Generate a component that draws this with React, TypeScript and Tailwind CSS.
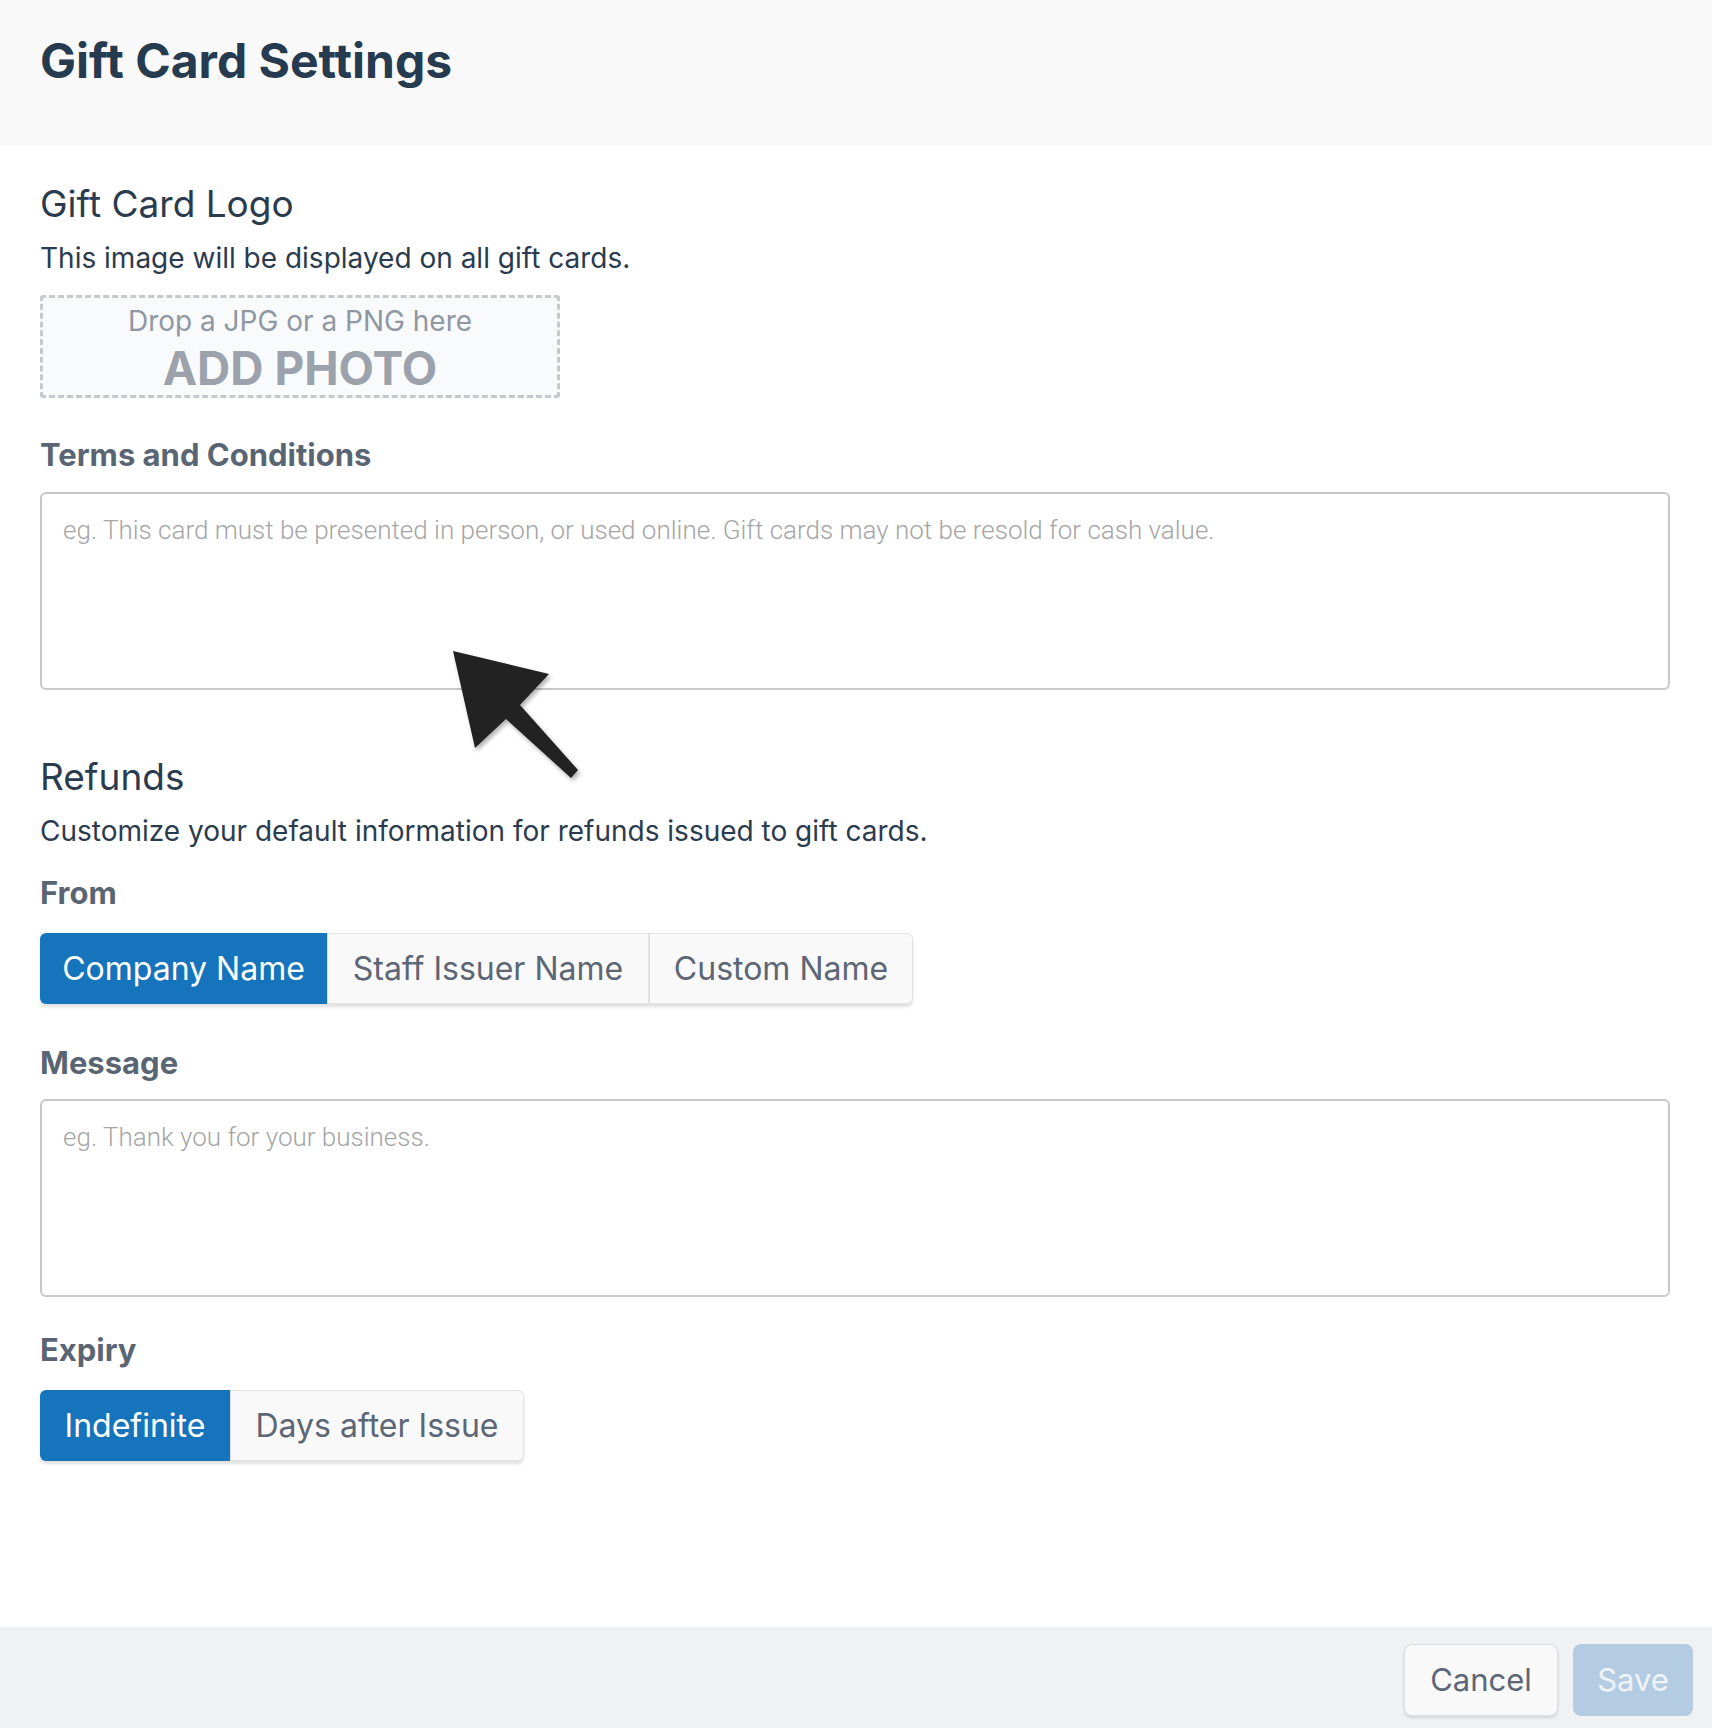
import React, { useState } from 'react';

const Segmented: React.FC<{ options: string[]; widths: string[]; value: number; onChange: (i: number) => void }> = ({
  options,
  widths,
  value,
  onChange,
}) => {
  return (
    <div className="flex w-fit rounded-[6px] shadow-[0_3px_3px_rgba(0,0,0,0.12)]">
      {options.map((opt, i) => (
        <button
          key={opt}
          onClick={() => onChange(i)}
          className={`h-[71px] ${widths[i]} text-[32px] leading-none text-center
            ${i === 0 ? 'rounded-l-[6px]' : ''} ${i === options.length - 1 ? 'rounded-r-[6px]' : ''}
            ${value === i ? 'bg-[#1574bb] text-white' : 'bg-[#f9f9f9] text-[#5c6675] border border-[#e2e3e5]'}
            ${i > 0 && value !== i ? 'border-l-[#dcdde0]' : ''}`}
        >
          {opt}
        </button>
      ))}
    </div>
  );
};

export default function App() {
  const [from, setFrom] = useState(0);
  const [expiry, setExpiry] = useState(0);

  return (
    <div className="relative flex flex-col min-h-screen bg-white font-['Inter',sans-serif] text-[#2b3b4e]">
      <header className="h-[145px] bg-[#f9f9f9] px-10 pt-[31px]">
        <h1 className="text-[48px] leading-[60px] font-bold text-[#263a50]">Gift Card Settings</h1>
      </header>

      <main className="flex-1 px-10 pr-[42px]">
        <h2 className="mt-[37px] text-[37px] leading-[44px]">Gift Card Logo</h2>
        <p className="mt-[15px] text-[28px] leading-[34px]">This image will be displayed on all gift cards.</p>

        <div className="mt-[20px] w-[520px] h-[103px] border-[3px] border-dashed border-[#c6c8cb] rounded-[3px] bg-[#f9fafb] flex flex-col items-center">
          <span className="mt-[6px] text-[28px] leading-[34px] text-[#8f97a2]">Drop a JPG or a PNG here</span>
          <span className="mt-[2px] text-[46px] leading-[56px] font-bold text-[#9ba2ac]">ADD PHOTO</span>
        </div>

        <label className="block mt-[40px] text-[31px] leading-[34px] font-bold text-[#5a6574]">Terms and Conditions</label>
        <textarea
          className="mt-[20px] block w-full h-[198px] resize-none border-2 border-[#c8c8ca] rounded-[6px] px-[21px] pt-[20px] font-['Roboto',sans-serif] text-[26px] leading-[32px] placeholder:text-[#a5a5a5] placeholder:font-light outline-none"
          placeholder="eg. This card must be presented in person, or used online. Gift cards may not be resold for cash value."
        />

        <h2 className="mt-[65px] text-[37px] leading-[44px]">Refunds</h2>
        <p className="mt-[15px] text-[28px] leading-[34px]">Customize your default information for refunds issued to gift cards.</p>

        <label className="block mt-[28px] text-[31px] leading-[34px] font-bold text-[#5a6574]">From</label>
        <div className="mt-[23px]">
          <Segmented
            options={['Company Name', 'Staff Issuer Name', 'Custom Name']}
            widths={['w-[287px]', 'w-[322px]', 'w-[264px]']}
            value={from}
            onChange={setFrom}
          />
        </div>

        <label className="block mt-[42px] text-[31px] leading-[34px] font-bold text-[#5a6574]">Message</label>
        <textarea
          className="mt-[19px] block w-full h-[198px] resize-none border-2 border-[#c8c8ca] rounded-[6px] px-[21px] pt-[20px] font-['Roboto',sans-serif] text-[26px] leading-[32px] placeholder:text-[#a5a5a5] placeholder:font-light outline-none"
          placeholder="eg. Thank you for your business."
        />

        <label className="block mt-[36px] text-[31px] leading-[34px] font-bold text-[#5a6574]">Expiry</label>
        <div className="mt-[23px]">
          <Segmented
            options={['Indefinite', 'Days after Issue']}
            widths={['w-[190px]', 'w-[294px]']}
            value={expiry}
            onChange={setExpiry}
          />
        </div>
      </main>

      <footer className="h-[101px] bg-[#f0f1f3] flex justify-end items-start gap-[15px] pt-[17px] pr-[19px]">
        <button className="w-[154px] h-[72px] rounded-[8px] bg-[#f9f9f9] border border-[#dcdee2] shadow-[0_2px_3px_rgba(0,0,0,0.12)] text-[31px] text-[#5c6675]">
          Cancel
        </button>
        <button className="w-[120px] h-[72px] rounded-[8px] bg-[#b4cce2] text-[31px] text-[#eef3f8]">Save</button>
      </footer>

      {/* pointer arrow over the page */}
      <svg
        className="absolute left-[445px] top-[645px] w-[140px] h-[140px] drop-shadow-[2px_3px_2px_rgba(0,0,0,0.3)]"
        viewBox="0 0 140 140"
      >
        <polygon points="8,6 104,29 75,60 133,125 126,133 61,74 30,103" fill="#222222" />
      </svg>
    </div>
  );
}
